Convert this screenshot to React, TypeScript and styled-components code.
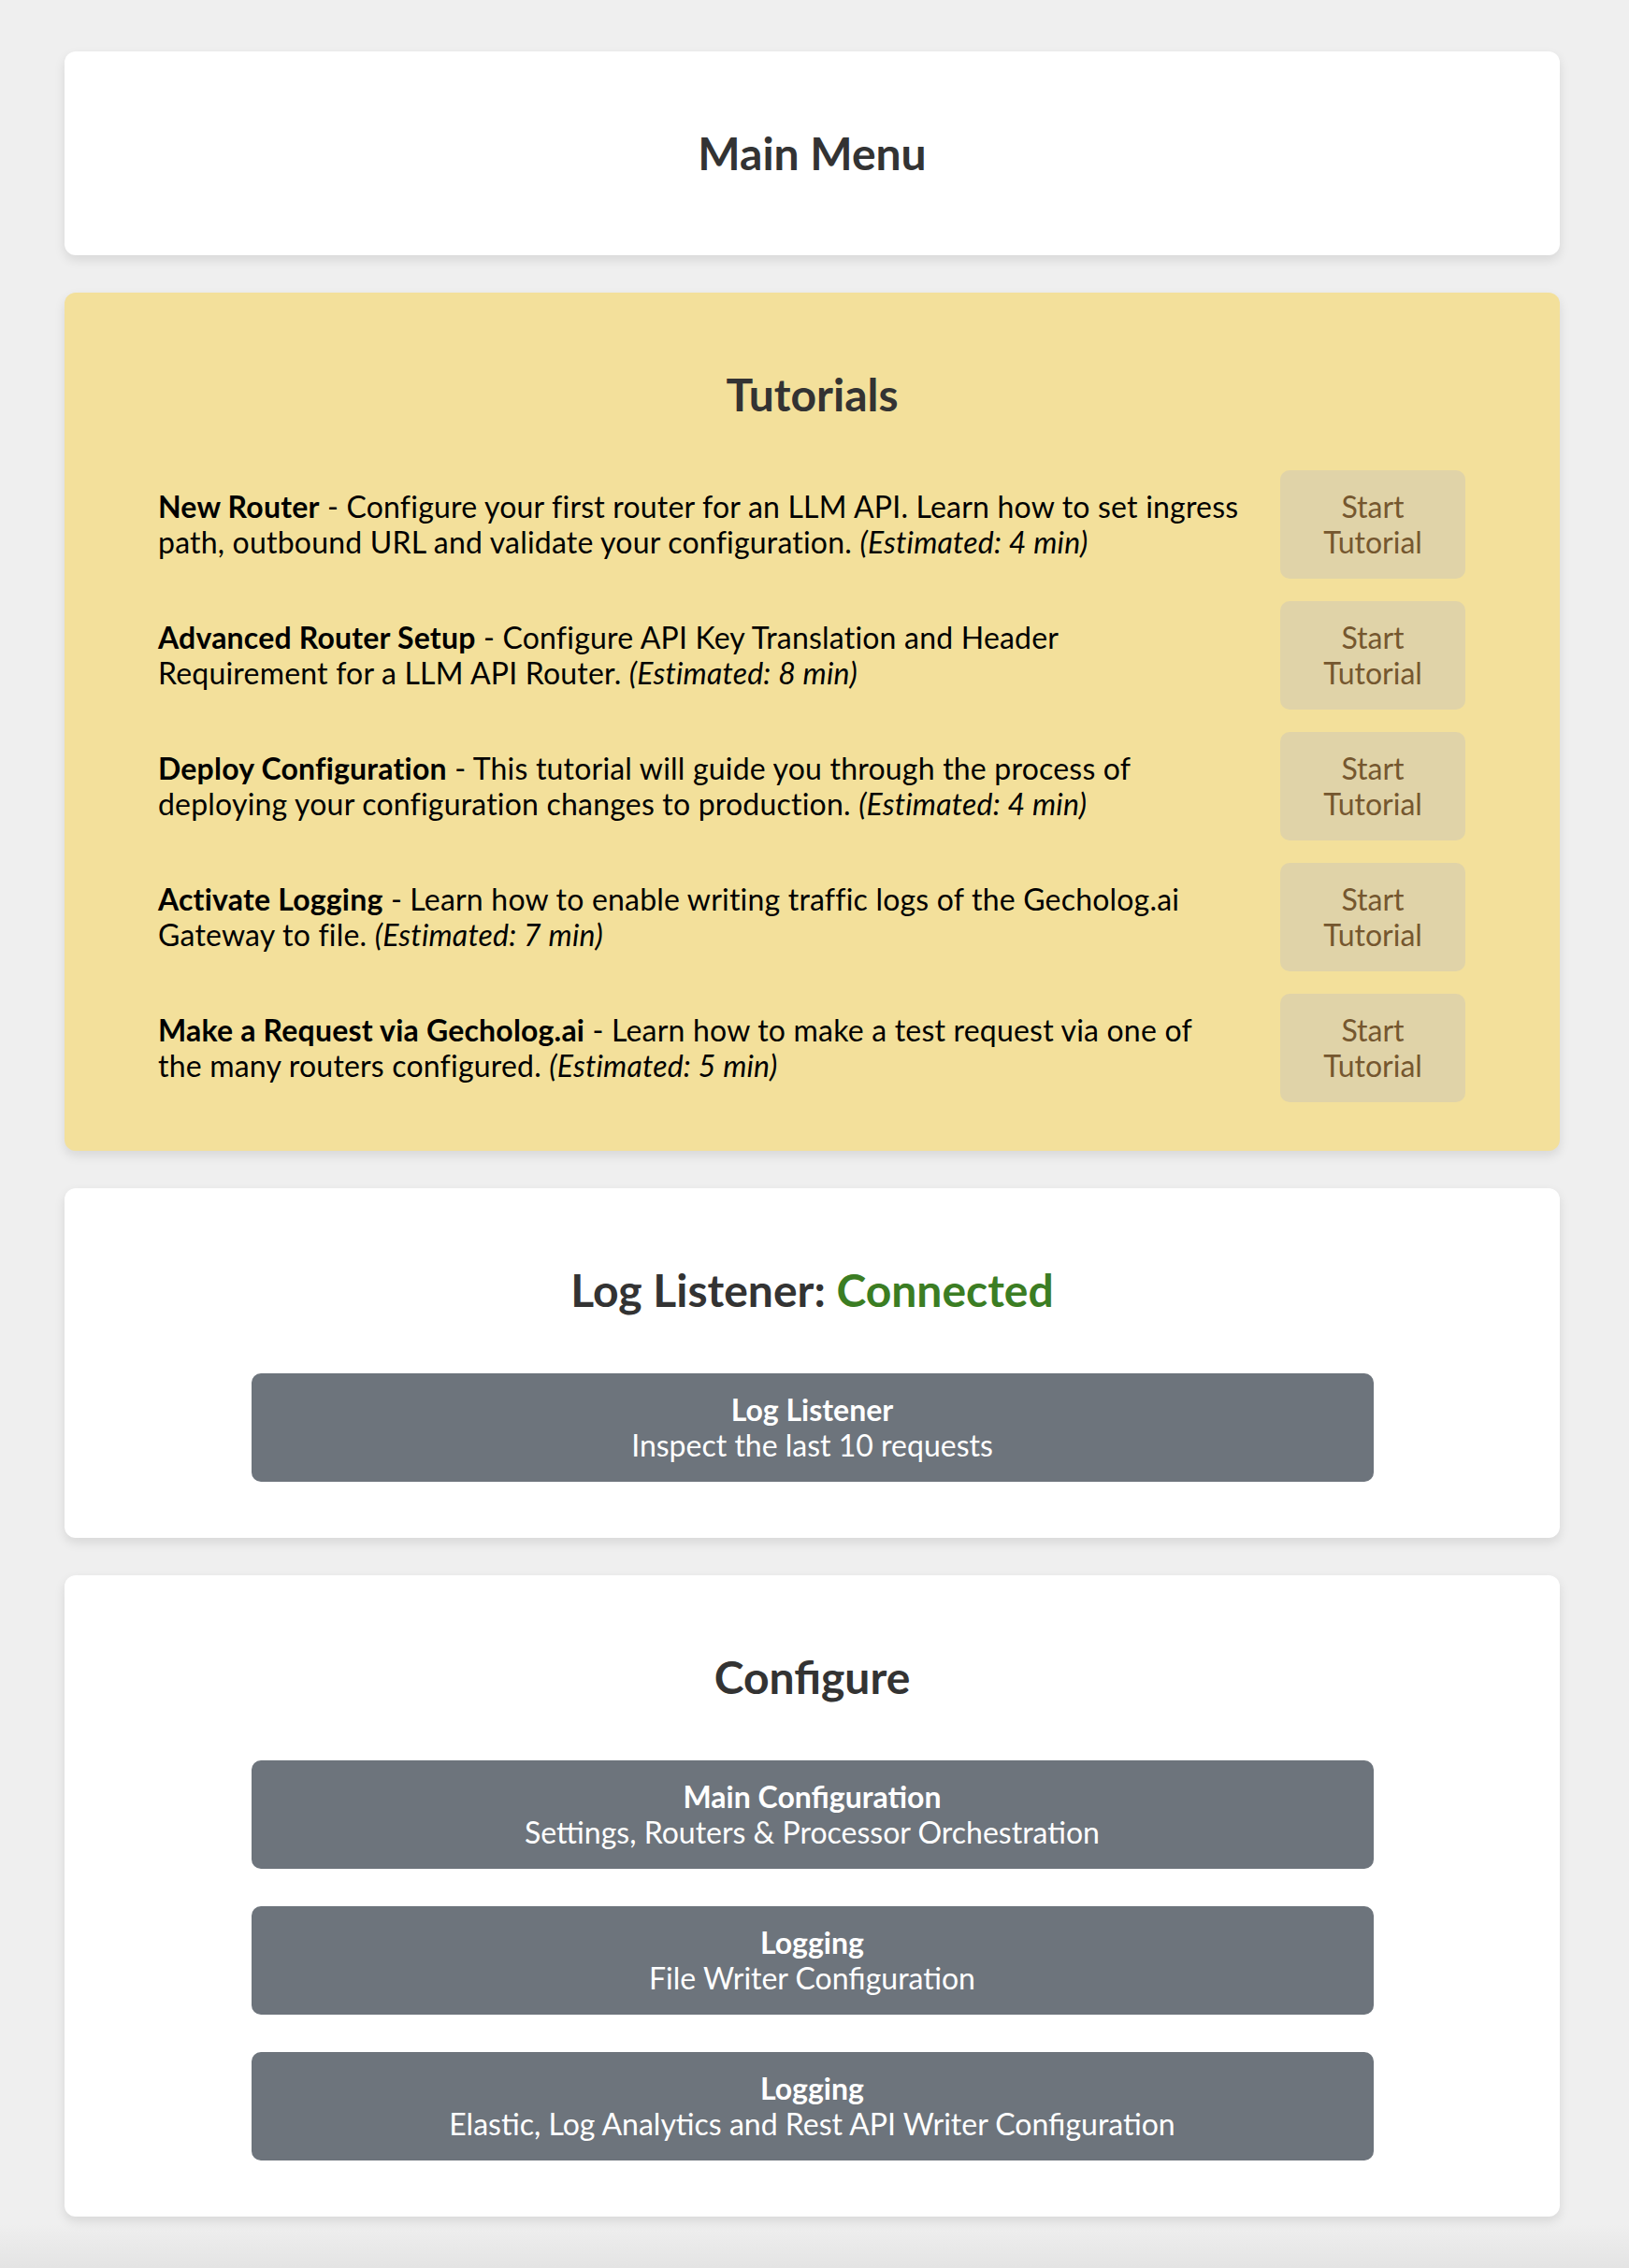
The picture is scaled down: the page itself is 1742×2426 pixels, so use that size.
import React from "react";
import styled, { createGlobalStyle } from "styled-components";

const GlobalStyle = createGlobalStyle`
  html, body {
    margin: 0;
    padding: 0;
    background: #efefef;
  }
  body {
    font-family: Lato, "Open Sans", sans-serif;
    color: #000;
  }
`;

// each description is split where the reference wraps it
const tutorials = [
  {
    title: "New Router",
    first: "Configure your first router for an LLM API. Learn how to set ingress",
    second: "path, outbound URL and validate your configuration.",
    time: "4 min",
  },
  {
    title: "Advanced Router Setup",
    first: "Configure API Key Translation and Header",
    second: "Requirement for a LLM API Router.",
    time: "8 min",
  },
  {
    title: "Deploy Configuration",
    first: "This tutorial will guide you through the process of",
    second: "deploying your configuration changes to production.",
    time: "4 min",
  },
  {
    title: "Activate Logging",
    first: "Learn how to enable writing traffic logs of the Gecholog.ai",
    second: "Gateway to file.",
    time: "7 min",
  },
  {
    title: "Make a Request via Gecholog.ai",
    first: "Learn how to make a test request via one of",
    second: "the many routers configured.",
    time: "5 min",
  },
];

const configure = [
  { title: "Main Configuration", sub: "Settings, Routers & Processor Orchestration" },
  { title: "Logging", sub: "File Writer Configuration" },
  { title: "Logging", sub: "Elastic, Log Analytics and Rest API Writer Configuration" },
];

const App = () => {
  return (
    <Page>
      <GlobalStyle />
      <Card>
        <Title>Main Menu</Title>
      </Card>

      <Card $tone="yellow">
        <Title>Tutorials</Title>
        <TutorialList>
          {tutorials.map((t, i) => (
            <TutorialRow key={i}>
              <TutorialText>
                <b>{t.title}</b> - {t.first}
                <br />
                {t.second} <i>(Estimated: {t.time})</i>
              </TutorialText>
              <StartButton>
                Start
                <br />
                Tutorial
              </StartButton>
            </TutorialRow>
          ))}
        </TutorialList>
      </Card>

      <Card>
        <Title>
          Log Listener: <Status>Connected</Status>
        </Title>
        <MenuButton>
          <b>Log Listener</b>
          <span>Inspect the last 10 requests</span>
        </MenuButton>
      </Card>

      <Card>
        <Title>Configure</Title>
        {configure.map((c, i) => (
          <MenuButton key={i}>
            <b>{c.title}</b>
            <span>{c.sub}</span>
          </MenuButton>
        ))}
      </Card>
    </Page>
  );
};

const Page = styled.div`
  min-height: 2426px;
  box-sizing: border-box;
  padding: 55px 74px 58px 69px;
  display: flex;
  flex-direction: column;
  gap: 40px;
  background: linear-gradient(
    to bottom,
    #efefef calc(100% - 50px),
    #e3e3e3 100%
  );
`;

const Card = styled.div<{ $tone?: "yellow" }>`
  background: ${(p) => (p.$tone === "yellow" ? "#f3e09b" : "#ffffff")};
  border-radius: 12px;
  padding: 40px;
  box-shadow: 0 5px 12px rgba(0, 0, 0, 0.1);
  display: flex;
  flex-direction: column;
  align-items: center;
`;

const Title = styled.h2`
  margin: 40px 0;
  font-size: 48px;
  line-height: 58px;
  font-weight: 700;
  color: #333333;
  text-align: center;
`;

const Status = styled.span`
  color: #3b7d23;
`;

const TutorialList = styled.div`
  align-self: stretch;
  padding: 0 61px 0 60px;
  display: flex;
  flex-direction: column;
`;

const TutorialRow = styled.div`
  display: flex;
  align-items: center;
  justify-content: space-between;
  gap: 30px;
  padding: 12px 0;
`;

const TutorialText = styled.div`
  flex: 1;
  font-size: 32px;
  line-height: 38px;
  letter-spacing: 0.2px;

  b {
    font-weight: 700;
  }
`;

const StartButton = styled.button`
  width: 198px;
  height: 116px;
  flex-shrink: 0;
  border: none;
  border-radius: 10px;
  background: #e0d3a8;
  color: #75572f;
  font-family: inherit;
  font-size: 32px;
  line-height: 38px;
  text-align: center;
  cursor: pointer;
`;

const MenuButton = styled.button`
  width: 1200px;
  height: 116px;
  margin: 20px 0;
  border: none;
  border-radius: 10px;
  background: #6d747c;
  color: #ffffff;
  font-family: inherit;
  font-size: 32px;
  line-height: 38px;
  display: flex;
  flex-direction: column;
  align-items: center;
  justify-content: center;
  cursor: pointer;

  & + & {
    margin-top: 20px;
  }
`;

export default App;
